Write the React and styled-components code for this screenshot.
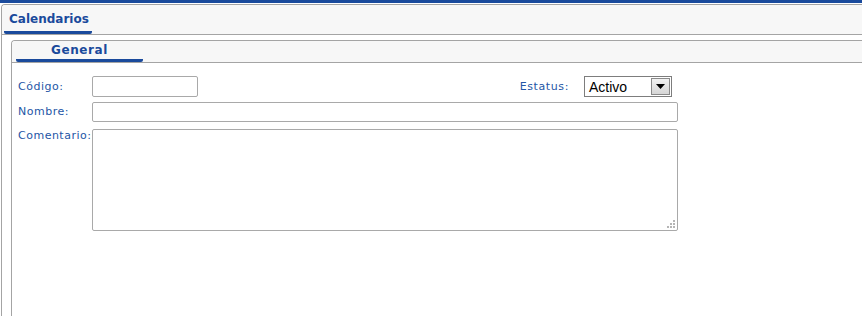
import React from "react";
import styled, { createGlobalStyle } from "styled-components";

const GlobalStyle = createGlobalStyle`
  html, body {
    margin: 0;
    padding: 0;
    background: #fff;
    overflow: hidden;
  }
  body {
    font-family: "DejaVu Sans", Verdana, sans-serif;
  }
`;

const Page = styled.div`
  display: flex;
  flex-direction: column;
  height: 316px;
`;

const TopBar = styled.div`
  height: 3px;
  background: #1a4a9c;
  flex-shrink: 0;
`;

const Panel = styled.div`
  display: flex;
  flex-direction: column;
  flex: 1;
  margin: ${(p) => (p.$inner ? "5px 0 0 9px" : "1px 0 0 1px")};
  border: 1px solid #a4a4a4;
  border-right: none;
  border-bottom: none;
  border-top-left-radius: 4px;
  overflow: hidden;
`;

const TabHeader = styled.div`
  display: flex;
  align-items: flex-end;
  height: ${(p) => p.$height}px;
  padding-left: ${(p) => p.$indent}px;
  background: #f7f7f7;
  border-bottom: 1px solid #a4a4a4;
  flex-shrink: 0;
`;

const Tab = styled.div`
  display: flex;
  align-items: center;
  justify-content: ${(p) => (p.$center ? "center" : "flex-start")};
  box-sizing: border-box;
  width: ${(p) => p.$width}px;
  height: 100%;
  padding-left: ${(p) => (p.$center ? 0 : 5)}px;
  padding-top: ${(p) => p.$top || 0}px;
  border-bottom: 3px solid #1a4a9c;
  border-radius: 0 0 2px 2px;
  color: #1a4a9c;
  font-size: 12px;
  font-weight: bold;
  letter-spacing: ${(p) => p.$spacing || 0}px;
`;

const Form = styled.div`
  display: grid;
  grid-template-columns: 74px 586px;
  padding: 13px 0 0 6px;
`;

const Label = styled.div`
  height: ${(p) => p.$height}px;
  margin-top: ${(p) => p.$gap || 0}px;
  font-size: 11px;
  color: #2456a6;
  line-height: ${(p) => p.$line || p.$height}px;
  white-space: nowrap;
  letter-spacing: 0.5px;
`;

const Field = styled.div`
  display: flex;
  align-items: flex-start;
  height: ${(p) => p.$height}px;
  margin-top: ${(p) => p.$gap || 0}px;
`;

const TextInput = styled.input`
  box-sizing: border-box;
  width: ${(p) => p.$width || 586}px;
  height: ${(p) => p.$height || 20}px;
  margin: 0;
  border: 1px solid #a9a9a9;
  border-radius: 2px;
  background: #fff;
  outline: none;
`;

const AreaWrap = styled.div`
  position: relative;
  margin-top: 7px;
`;

const TextArea = styled.textarea`
  display: block;
  box-sizing: border-box;
  width: 586px;
  height: 102px;
  margin: 0;
  border: 1px solid #a9a9a9;
  border-radius: 2px;
  resize: none;
  outline: none;
`;

const Grip = styled.svg`
  position: absolute;
  right: 3px;
  bottom: 3px;
`;

const StatusGroup = styled.div`
  display: flex;
  align-items: center;
  margin-left: auto;
  margin-right: 6px;
`;

const StatusLabel = styled(Label)`
  margin-right: 15px;
  letter-spacing: 0.6px;
`;

const Select = styled.div`
  display: flex;
  align-items: center;
  box-sizing: border-box;
  width: 88px;
  height: 21px;
  border: 1px solid #7d7d7d;
  background: #fff;
  padding: 1px;
`;

const SelectText = styled.span`
  flex: 1;
  padding-left: 3px;
  font-family: "Liberation Sans", Arial, sans-serif;
  font-size: 14px;
  color: #000;
`;

const SelectButton = styled.div`
  display: flex;
  align-items: center;
  justify-content: center;
  box-sizing: border-box;
  width: 19px;
  height: 17px;
  border: 1px solid #8a8a8a;
  background: linear-gradient(#f2f2f2, #d6d6d6);
`;

const ResizeGrip = () => (
  <Grip width="10" height="10" viewBox="0 0 10 10">
    {[
      [8, 0],
      [5, 3],
      [8, 3],
      [2, 6],
      [5, 6],
      [8, 6],
    ].map(([x, y]) => (
      <rect key={`${x}-${y}`} x={x} y={y + 2} width="2" height="2" fill="#b5b5b5" />
    ))}
  </Grip>
);

const App = () => {
  return (
    <>
      <GlobalStyle />
      <Page>
        <TopBar />
        <Panel>
          <TabHeader $height={29} $indent={2}>
            <Tab $width={88} $top={1}>
              Calendarios
            </Tab>
          </TabHeader>
          <Panel $inner>
            <TabHeader $height={21} $indent={4}>
              <Tab $width={127} $center $spacing={0.6}>
                General
              </Tab>
            </TabHeader>
            <Form>
              <Label $height={21}>Código:</Label>
              <Field $height={21}>
                <TextInput $width={106} $height={21} />
                <StatusGroup>
                  <StatusLabel $height={21}>Estatus:</StatusLabel>
                  <Select>
                    <SelectText>Activo</SelectText>
                    <SelectButton>
                      <svg width="9" height="5" viewBox="0 0 9 5">
                        <path d="M0 0h9L4.5 5z" fill="#000" />
                      </svg>
                    </SelectButton>
                  </Select>
                </StatusGroup>
              </Field>
              <Label $height={20} $gap={5}>
                Nombre:
              </Label>
              <Field $height={20} $gap={5}>
                <TextInput />
              </Field>
              <Label $height={14} $gap={7} $line={14}>
                Comentario:
              </Label>
              <AreaWrap>
                <TextArea />
                <ResizeGrip />
              </AreaWrap>
            </Form>
          </Panel>
        </Panel>
      </Page>
    </>
  );
};

export default App;
